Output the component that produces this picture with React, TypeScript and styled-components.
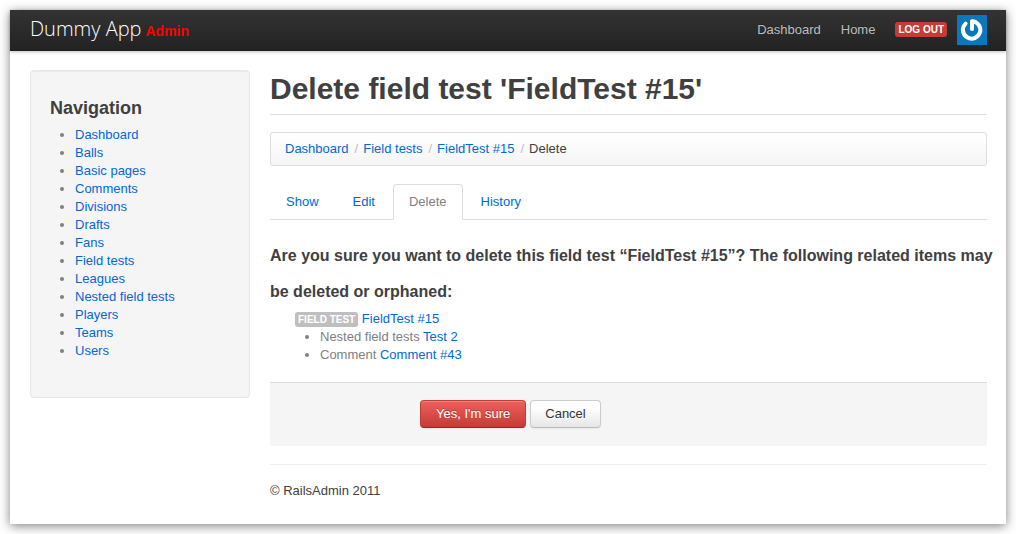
import React from "react";
import styled, { createGlobalStyle, css } from "styled-components";

const GlobalStyle = createGlobalStyle`
  * { box-sizing: border-box; }
  body {
    margin: 0;
    background: #fff;
    color: #404040;
    font: 13px/18px "Liberation Sans", Arial, sans-serif;
  }
  a { color: #0069d6; text-decoration: none; }
  h1, h2, h4, p { margin: 0; }
`;

const Window = styled.div`
  margin: 10px;
  background: #fff;
  box-shadow: 0 2px 10px rgba(0, 0, 0, 0.5);
`;

const Navbar = styled.header`
  display: flex;
  align-items: center;
  justify-content: space-between;
  height: 41px;
  padding: 0 19px 2px 20px;
  background: linear-gradient(#333, #222);
  box-shadow: 0 1px 3px rgba(0, 0, 0, 0.25), inset 0 -1px 0 rgba(0, 0, 0, 0.1);
`;

const Brand = styled.a`
  display: flex;
  align-items: baseline;
  gap: 4px;
  padding-bottom: 2px;
  color: #fff;
  font: 300 20px/24px "Open Sans", "Liberation Sans", sans-serif;
`;

const BrandTag = styled.small`
  color: #f00;
  font: bold 14px/18px "Liberation Sans", Arial, sans-serif;
`;

const NavLinks = styled.nav`
  display: flex;
  align-items: center;
  gap: 20px;
`;

const NavLink = styled.a`
  color: #bfbfbf;
  text-shadow: 0 -1px 0 rgba(0, 0, 0, 0.25);
`;

const Account = styled.div`
  display: flex;
  align-items: center;
  gap: 10px;
`;

const Label = styled.span<{ $tone?: "important" }>`
  display: inline-block;
  padding: 0 3px;
  border-radius: 3px;
  background: ${(p) => (p.$tone === "important" ? "#c43c35" : "#bfbfbf")};
  color: #fff;
  font-size: 10px;
  font-weight: bold;
  line-height: 15px;
  text-transform: uppercase;
  white-space: nowrap;
`;

const Avatar = styled.svg`
  display: block;
  width: 30px;
  height: 30px;
`;

const Body = styled.div`
  display: flex;
  align-items: flex-start;
  gap: 20px;
  padding: 19px 19px 24px 20px;
`;

const Sidebar = styled.aside`
  flex: 0 0 220px;
  padding: 20px 19px 37px;
  border: 1px solid #e6e6e6;
  border-radius: 4px;
  background: #f5f5f5;
  box-shadow: inset 0 1px 1px rgba(0, 0, 0, 0.05);
`;

const SidebarTitle = styled.h2`
  font-size: 18px;
  line-height: 35px;
`;

const BulletList = styled.ul`
  margin: 0;
  padding: 0 0 0 25px;
  color: #808080;
  list-style: disc;
`;

const Main = styled.main`
  flex: 1;
  min-width: 0;
`;

const PageTitle = styled.h1`
  padding: 1px 0 7px;
  border-bottom: 1px solid #ddd;
  font-size: 30px;
  line-height: 36px;
`;

const Breadcrumb = styled.ol`
  display: flex;
  margin: 17px 0 18px;
  padding: 7px 14px;
  border: 1px solid #ddd;
  border-radius: 3px;
  background: linear-gradient(#fff, #f5f5f5);
  box-shadow: inset 0 1px 0 #fff;
  list-style: none;
`;

const Crumb = styled.li`
  & + &::before {
    content: "/";
    padding: 0 5px 0 6px;
    color: #bfbfbf;
  }
`;

const Tabs = styled.nav`
  display: flex;
  gap: 2px;
  border-bottom: 1px solid #ddd;
`;

const Tab = styled.a<{ $active?: boolean }>`
  margin-bottom: -1px;
  padding: 8px 15px;
  border: 1px solid transparent;
  border-radius: 4px 4px 0 0;
  line-height: 18px;
  ${(p) =>
    p.$active &&
    css`
      border-color: #ddd #ddd #fff;
      background: #fff;
      color: #808080;
    `}
`;

const Question = styled.h4`
  margin-right: -10px;
  padding-top: 18px;
  font-size: 16px;
  line-height: 36px;
`;

const RelatedList = styled.ul`
  margin: 0 0 18px;
  padding: 0 0 0 25px;
  color: #808080;
  list-style: none;
`;

const FormActions = styled.form`
  display: flex;
  gap: 4px;
  padding: 17px 20px 18px 150px;
  border-top: 1px solid #ddd;
  border-radius: 0 0 3px 3px;
  background: #f5f5f5;
`;

const Button = styled.button<{ $danger?: boolean }>`
  height: 28px;
  padding: 0 14px;
  border: 1px solid #ccc;
  border-bottom-color: #bbb;
  border-radius: 4px;
  background: linear-gradient(#fff, #fff 25%, #e6e6e6);
  box-shadow: inset 0 1px 0 rgba(255, 255, 255, 0.2), 0 1px 2px rgba(0, 0, 0, 0.05);
  color: #333;
  font: inherit;
  text-shadow: 0 1px 1px rgba(255, 255, 255, 0.75);
  ${(p) =>
    p.$danger &&
    css`
      padding: 0 15px;
      border-color: #c43c35 #c43c35 #882a25;
      background: linear-gradient(#ee5f5b, #c43c35);
      color: #fff;
      text-shadow: 0 -1px 0 rgba(0, 0, 0, 0.25);
    `}
`;

const Footer = styled.footer`
  margin-top: 18px;
  padding-top: 17px;
  border-top: 1px solid #eee;
`;

const models = [
  "Dashboard", "Balls", "Basic pages", "Comments", "Divisions", "Drafts", "Fans",
  "Field tests", "Leagues", "Nested field tests", "Players", "Teams", "Users",
];

const tabs = ["Show", "Edit", "Delete", "History"];

export default function App() {
  return (
    <>
      <GlobalStyle />
      <Window>
        <Navbar>
          <Brand href="#">
            Dummy App <BrandTag>Admin</BrandTag>
          </Brand>
          <NavLinks>
            <NavLink href="#">Dashboard</NavLink>
            <NavLink href="#">Home</NavLink>
            <Account>
              <Label as="a" href="#" $tone="important">Log out</Label>
              <Avatar viewBox="0 0 30 30" role="img" aria-label="User avatar">
                <rect width="30" height="30" fill="#0a78bb" />
                <path
                  d="M8.6 8.6A8.7 8.7 0 1 0 15 6.2V14"
                  fill="none"
                  stroke="#fff"
                  strokeWidth="4"
                  strokeLinecap="round"
                  strokeLinejoin="round"
                />
              </Avatar>
            </Account>
          </NavLinks>
        </Navbar>
        <Body>
          <Sidebar>
            <SidebarTitle>Navigation</SidebarTitle>
            <BulletList>
              {models.map((name) => (
                <li key={name}><a href="#">{name}</a></li>
              ))}
            </BulletList>
          </Sidebar>
          <Main>
            <PageTitle>Delete field test 'FieldTest #15'</PageTitle>
            <Breadcrumb>
              <Crumb><a href="#">Dashboard</a></Crumb>
              <Crumb><a href="#">Field tests</a></Crumb>
              <Crumb><a href="#">FieldTest #15</a></Crumb>
              <Crumb>Delete</Crumb>
            </Breadcrumb>
            <Tabs>
              {tabs.map((name) => (
                <Tab key={name} href="#" $active={name === "Delete"}>{name}</Tab>
              ))}
            </Tabs>
            <Question>
              Are you sure you want to delete this field test “FieldTest #15”? The following
              related items may be deleted or orphaned:
            </Question>
            <RelatedList>
              <li>
                <Label>Field test</Label> <a href="#">FieldTest #15</a>
                <BulletList>
                  <li>Nested field tests <a href="#">Test 2</a></li>
                  <li>Comment <a href="#">Comment #43</a></li>
                </BulletList>
              </li>
            </RelatedList>
            <FormActions onSubmit={(e) => e.preventDefault()}>
              <Button type="submit" $danger>Yes, I'm sure</Button>
              <Button type="button">Cancel</Button>
            </FormActions>
            <Footer>
              <p>© RailsAdmin 2011</p>
            </Footer>
          </Main>
        </Body>
      </Window>
    </>
  );
}
